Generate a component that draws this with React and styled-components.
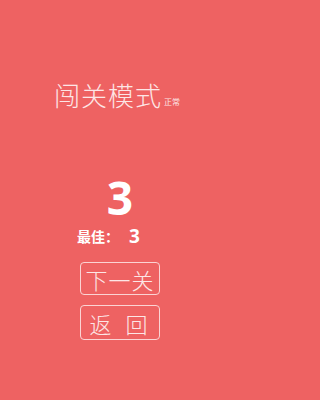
import React from "react";
import styled, { createGlobalStyle } from "styled-components";

const Global = createGlobalStyle`
  html, body { margin: 0; padding: 0; }
  body { background: #ee6262; }
`;

const Screen = styled.div`
  width: 240px;
  height: 400px;
  background: #ee6262;
  font-family: "Noto Sans CJK SC", "Noto Sans", sans-serif;
  color: #fff;
  display: flex;
  flex-direction: column;
  align-items: center;
  overflow: hidden;
`;

const TitleRow = styled.div`
  margin-top: 78px;
  display: flex;
  align-items: flex-end;
  align-self: flex-start;
  padding-left: 54px;
`;

const Title = styled.span`
  font-size: 26px;
  font-weight: 300;
  letter-spacing: 1px;
  line-height: 34px;
  color: #fde6e6;
`;

const Mode = styled.span`
  font-size: 8px;
  line-height: 8px;
  margin-left: 2px;
  margin-bottom: 6px;
  color: #fde6e6;
`;

const Score = styled.div`
  margin-top: 62px;
  font-family: "Open Sans", "Noto Sans", sans-serif;
  font-size: 46px;
  font-weight: 700;
  line-height: 46px;
`;

const BestRow = styled.div`
  margin-top: 6px;
  display: flex;
  align-items: center;
  font-size: 14px;
  line-height: 20px;
  font-weight: 700;
  margin-right: 23px;
  white-space: nowrap;
`;

const BestValue = styled.span`
  font-family: "Open Sans", "Noto Sans", sans-serif;
  font-size: 19px;
  line-height: 20px;
  margin-left: 10px;
`;

const Button = styled.div`
  box-sizing: border-box;
  width: 80px;
  height: ${(p) => p.$h}px;
  margin-top: ${(p) => p.$mt}px;
  padding-left: ${(p) => p.$pl}px;
  border: 1px solid #fbd3d3;
  border-radius: 4px;
  display: flex;
  align-items: center;
  justify-content: center;
  font-size: 22px;
  font-weight: 300;
  color: #fde6e6;
  white-space: nowrap;
  letter-spacing: ${(p) => p.$ls}px;
`;

export default function App() {
  return (
    <>
      <Global />
      <Screen>
        <TitleRow>
          <Title>闯关模式</Title>
          <Mode>正常</Mode>
        </TitleRow>
        <Score>3</Score>
        <BestRow>
          最佳：<BestValue>3</BestValue>
        </BestRow>
        <Button $h={33} $mt={16} $pl={0} $ls={1}>下一关</Button>
        <Button $h={35} $mt={10} $pl={11} $ls={14}>返回</Button>
      </Screen>
    </>
  );
}
